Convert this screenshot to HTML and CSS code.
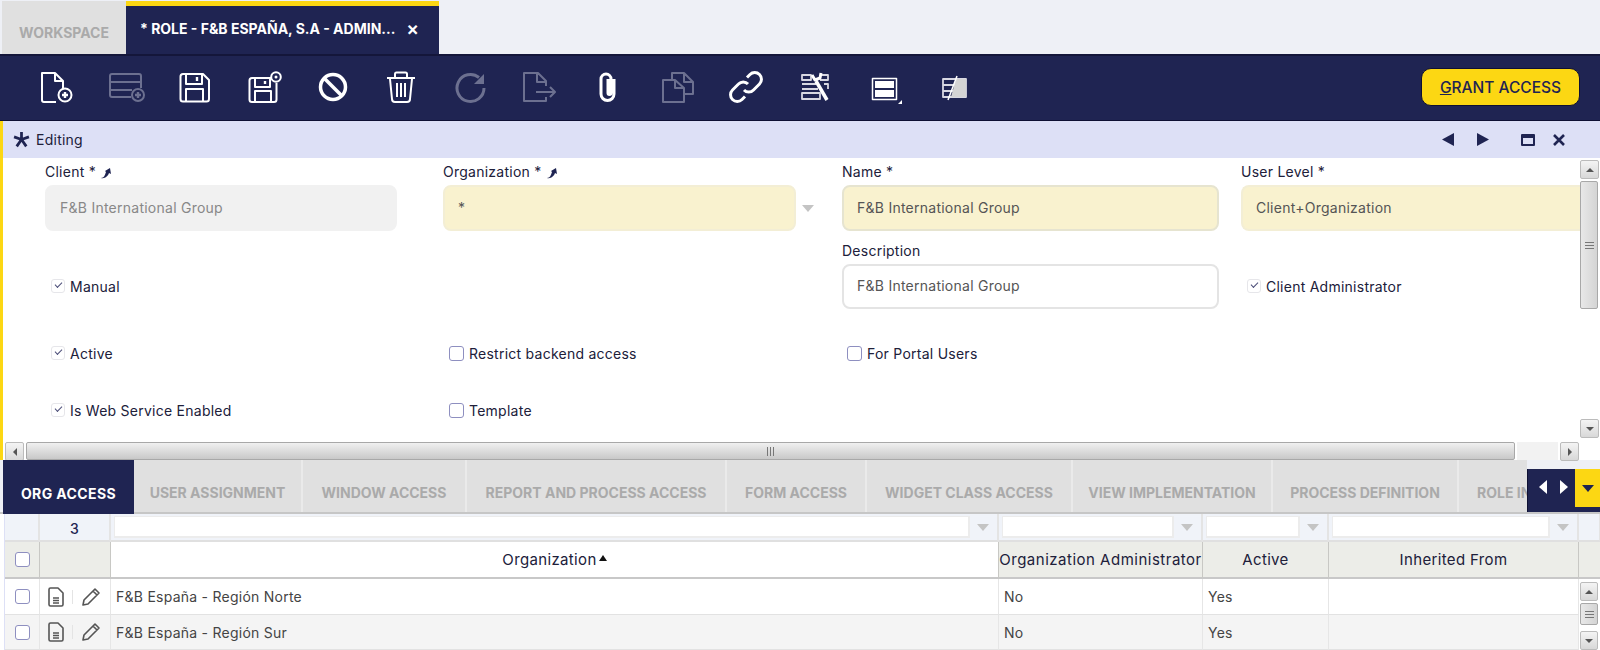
FILE: index.html
```html
<!DOCTYPE HTML>
<html>

<head>
    <meta charset="utf-8">
    <title>Role - F&amp;B España, S.A - Admin</title>
    <link rel="stylesheet" href="styles.css">
</head>

<body>
    <div class="top-tabs">
        <div class="top-tab">WORKSPACE</div>
        <div class="top-tab top-tab-on"><span>* ROLE - F&amp;B ESPAÑA, S.A - ADMIN...</span><b>×</b></div>
    </div>

    <div class="toolbar">
        <div class="tool"><svg viewBox="0 0 40 34"><path d="M17 32H5a2 2 0 0 1-2-2V3h13l8 8v8M16 3v8h8"/><circle cx="26" cy="25" r="6.500"/><path class="heavy" d="M23 25h6M26 22v6"/></svg></div>
        <div class="tool off"><svg viewBox="0 0 40 34"><path d="M23 27H4a2 2 0 0 1-2-2V6a2 2 0 0 1 2-2h27a2 2 0 0 1 2 2v12M2 12h31M2 20h22"/><circle cx="30" cy="25" r="6"/><path class="heavy" d="M27 25h6M30 22v6"/></svg></div>
        <div class="tool"><svg viewBox="0 0 40 34"><path d="M6 4h20l6 6v19a2.500 2.500 0 0 1-2.500 2.500H6A2.500 2.500 0 0 1 3.500 29V6.500A2.500 2.500 0 0 1 6 4zM9 4v10h16V4M9 31V19h17v12"/><path class="heavy" d="M20 7v4"/></svg></div>
        <div class="tool"><svg viewBox="0 0 40 34"><path d="M25 8H6a2.500 2.500 0 0 0-2.500 2.500v19A2.500 2.500 0 0 0 6 32h22a2.500 2.500 0 0 0 2.500-2.500V13M9 8v9h15V8M9 32V21h16v11"/><path class="heavy" d="M19 11v3"/><circle cx="30" cy="7" r="4.800"/><circle class="dot" cx="30" cy="7" r="1.500"/></svg></div>
        <div class="tool"><svg viewBox="0 0 40 34"><circle class="thick" cx="18" cy="17" r="12.500"/><path class="thick" d="M9 8l18 18"/></svg></div>
        <div class="tool"><svg viewBox="0 0 40 34"><path d="M3 8h28M11 7V4a1.500 1.500 0 0 1 1.500-1.500h9A1.500 1.500 0 0 1 23 4v3M6 9l2 20a3 3 0 0 0 3 3h12a3 3 0 0 0 3-3l2-20M13 13v14M17 13v14M21 13v14"/></svg></div>
        <div class="tool off"><svg viewBox="0 0 40 34"><path class="mid" d="M31 18a13.500 13.500 0 1 1-5-10.500"/><path class="fill" d="M31 4v10H21z"/></svg></div>
        <div class="tool off"><svg viewBox="0 0 40 34"><path d="M24 16v-5l-8-8H2v28h22v-4M15 3v9h9M14 22h19M28 17l5 5-5 5"/></svg></div>
        <div class="tool"><svg viewBox="0 0 40 34"><path class="mid" d="M23 9v15a6.500 6.500 0 0 1-13 0V9a5 5 0 0 1 10 0v14a1.500 1.500 0 0 1-3 0V9"/></svg></div>
        <div class="tool off"><svg viewBox="0 0 40 34"><path d="M12 9V3h12l9 9v12h-9M3 10h12l9 8v14H3zM15 10v8h9M24 3v9h9"/></svg></div>
        <div class="tool"><svg viewBox="0 0 40 34"><path class="mid" d="M15 20a6.500 6.500 0 0 0 9.500 0l6-6a6.500 6.500 0 0 0-9.500-9.500l-3 3M19 14a6.500 6.500 0 0 0-9.500 0l-6 6a6.500 6.500 0 0 0 9.500 9.500l3-3"/></svg></div>
        <div class="tool"><svg viewBox="0 0 40 34"><path class="soft" d="M4 5h9v5H4zM22 5h8v5h-8M4 14h14M4 19h16M26 14h4v5M4 23h18v6H4z"/><path class="thick" d="M18 11l11 19"/><path class="mid" d="M14 5l3 5 5-2 1-5"/></svg></div>
        <div class="tool"><svg viewBox="0 0 40 34"><rect class="thin" x="5.500" y="8.500" width="24" height="21"/><rect class="fill" x="8" y="11" width="19" height="7"/><rect class="fill" x="8" y="20" width="19" height="7"/><path class="fill" d="M35 30v4h-4z"/></svg></div>
        <div class="tool"><svg viewBox="0 0 40 34"><path class="soft" d="M7 9h23v18H7zM7 15h23M7 21h23"/><path class="fill faded" d="M20 9h10v18H15z"/><path class="thin" d="M21 6l-9 24"/></svg></div>
        <button class="grant"><u>G</u>RANT ACCESS</button>
    </div>

    <div class="status">
        <svg class="star" viewBox="0 0 16 16"><path d="M8 1v7M8 8L1 5.500M8 8l7-2.500M8 8l-4.500 6.500M8 8l4.500 6.500"/></svg>
        <span>Editing</span>
        <div class="status-icons">
            <svg viewBox="0 0 12 13"><path d="M12 0v13L0 6.500z"/></svg>
            <svg viewBox="0 0 12 13"><path d="M0 0v13l12-6.500z"/></svg>
            <svg class="wide" viewBox="0 0 16 14"><path d="M2 1h12a1 1 0 0 1 1 1v10a1 1 0 0 1-1 1H2a1 1 0 0 1-1-1V2a1 1 0 0 1 1-1zm1 4v6h10V5z"/></svg>
            <svg class="wide shut" viewBox="0 0 14 14"><path class="cross" d="M2 2l10 10M12 2L2 12"/></svg>
        </div>
    </div>

    <div class="form-box">
        <div class="form-main">
            <div class="form-grid">
                <div class="field">
                    <label>Client * <svg class="pin" viewBox="0 0 12 12"><path d="M1 11c3 0 4-3 5-6L5 4l5-3 1 6-2-1c-1 3-4 6-8 5z"/></svg></label>
                    <div class="input input-off size-a">F&amp;B International Group</div>
                </div>
                <div class="field">
                    <label>Organization * <svg class="pin" viewBox="0 0 12 12"><path d="M1 11c3 0 4-3 5-6L5 4l5-3 1 6-2-1c-1 3-4 6-8 5z"/></svg></label>
                    <div class="input-row">
                        <div class="input input-req size-b">*</div>
                        <i class="arrow"></i>
                    </div>
                </div>
                <div class="field">
                    <label>Name *</label>
                    <div class="input input-req input-line size-c">F&amp;B International Group</div>
                </div>
                <div class="field">
                    <label>User Level *</label>
                    <div class="input input-req input-open">Client+Organization</div>
                </div>

                <div class="check check-mid"><i class="box box-on"></i>Manual</div>
                <div></div>
                <div class="field">
                    <label>Description</label>
                    <div class="input input-line size-c">F&amp;B International Group</div>
                </div>
                <div class="check check-mid"><i class="box box-on"></i>Client Administrator</div>

                <div class="check"><i class="box box-on"></i>Active</div>
                <div class="check"><i class="box"></i>Restrict backend access</div>
                <div class="check check-col3"><i class="box"></i>For Portal Users</div>
                <div></div>

                <div class="check"><i class="box box-on"></i>Is Web Service Enabled</div>
                <div class="check"><i class="box"></i>Template</div>
                <div></div>
                <div></div>
            </div>
            <div class="vbar">
                <div class="sbtn"><i class="tri-up"></i></div>
                <div class="vthumb"><i class="grip"></i></div>
                <div class="strough"></div>
                <div class="sbtn"><i class="tri-down"></i></div>
            </div>
        </div>
        <div class="hbar">
            <div class="sbtn"><i class="tri-left"></i></div>
            <div class="hthumb"><i class="grip grip-v"></i></div>
            <div class="strough"></div>
            <div class="sbtn"><i class="tri-right"></i></div>
        </div>
    </div>

    <div class="sub-tabs">
        <div class="sub-tab sub-tab-on">ORG ACCESS</div>
        <div class="sub-tab">USER ASSIGNMENT</div>
        <div class="sub-tab">WINDOW ACCESS</div>
        <div class="sub-tab">REPORT AND PROCESS ACCESS</div>
        <div class="sub-tab">FORM ACCESS</div>
        <div class="sub-tab">WIDGET CLASS ACCESS</div>
        <div class="sub-tab">VIEW IMPLEMENTATION</div>
        <div class="sub-tab">PROCESS DEFINITION</div>
        <div class="sub-tab">ROLE IN</div>
        <div class="tab-nav">
            <span class="tab-arrows"><i class="nav-left"></i><i class="nav-right"></i></span>
            <span class="tab-menu"><i class="nav-down"></i></span>
        </div>
    </div>

    <div class="grid">
        <div class="flt"></div>
        <div class="flt flt-count">3</div>
        <div class="flt"><div class="flt-input"></div><i class="arrow"></i></div>
        <div class="flt"><div class="flt-input"></div><i class="arrow"></i></div>
        <div class="flt"><div class="flt-input"></div><i class="arrow"></i></div>
        <div class="flt"><div class="flt-input"></div><i class="arrow"></i></div>
        <div class="flt"></div>

        <div class="hd hd-check"><i class="box"></i></div>
        <div class="hd"></div>
        <div class="hd hd-plain">Organization<i class="sort"></i></div>
        <div class="hd hd-tight">Organization Administrator</div>
        <div class="hd">Active</div>
        <div class="hd">Inherited From</div>
        <div class="hd"></div>

        <div class="cell cell-check"><i class="box"></i></div>
        <div class="cell cell-icons">
            <svg viewBox="0 0 16 20"><path d="M2.500 1H10l5 5v11.500a1.500 1.500 0 0 1-1.500 1.500h-11A1.500 1.500 0 0 1 1 17.500v-15A1.500 1.500 0 0 1 2.500 1zM5 11h6M5 13.500h6M5 16h6"/></svg>
            <i class="sep"></i>
            <svg class="pencil" viewBox="0 0 20 20"><path d="M2 18l1-5L14 2l4 4L7 17zM12 4l4 4"/></svg>
        </div>
        <div class="cell">F&amp;B España - Región Norte</div>
        <div class="cell">No</div>
        <div class="cell">Yes</div>
        <div class="cell"></div>
        <div class="grid-bar">
            <div class="sbtn"><i class="tri-up"></i></div>
            <div class="vthumb"><i class="grip"></i></div>
            <div class="strough"></div>
            <div class="sbtn"><i class="tri-down"></i></div>
        </div>

        <div class="cell cell-alt cell-check"><i class="box"></i></div>
        <div class="cell cell-alt cell-icons">
            <svg viewBox="0 0 16 20"><path d="M2.500 1H10l5 5v11.500a1.500 1.500 0 0 1-1.500 1.500h-11A1.500 1.500 0 0 1 1 17.500v-15A1.500 1.500 0 0 1 2.500 1zM5 11h6M5 13.500h6M5 16h6"/></svg>
            <i class="sep"></i>
            <svg class="pencil" viewBox="0 0 20 20"><path d="M2 18l1-5L14 2l4 4L7 17zM12 4l4 4"/></svg>
        </div>
        <div class="cell cell-alt">F&amp;B España - Región Sur</div>
        <div class="cell cell-alt">No</div>
        <div class="cell cell-alt">Yes</div>
        <div class="cell cell-alt"></div>
    </div>
</body>

</html>
```

FILE: styles.css
```css
* {
    margin: 0;
    padding: 0;
    box-sizing: border-box;
}

body {
    width: 1600px;
    height: 650px;
    overflow: hidden;
    background: #fff;
    font-family: Inter, "Open Sans", sans-serif;
    font-size: 14px;
    letter-spacing: 0.25px;
    color: #20203a;
}

i {
    display: block;
}

/* top tabs */
.top-tabs {
    height: 56px;
    display: flex;
    padding: 1px 0 0 2px;
    background: #eef0f6;
    border-bottom: 2px solid #14163a;
}

.top-tab {
    width: 124px;
    background: #e0e0e0;
    color: #aaa;
    font-size: 14px;
    font-weight: 700;
    letter-spacing: 0;
    display: flex;
    align-items: center;
    justify-content: center;
    padding-top: 9px;
}

.top-tab-on {
    width: 313px;
    background: #1f2452;
    border-top: 5px solid #fcd713;
    color: #fff;
    justify-content: flex-start;
    padding: 0 0 3px 14px;
}

.top-tab-on b {
    margin-left: 11px;
    font-size: 19px;
    font-weight: 600;
    line-height: 14px;
}

/* toolbar */
.toolbar {
    height: 65px;
    display: flex;
    align-items: center;
    padding: 0 20px 2px 39px;
    background: #1f2452;
    border-bottom: 1px solid #0e1033;
}

.tool {
    width: 69px;
    height: 34px;
    flex: none;
}

.tool svg {
    height: 34px;
    width: 40px;
    fill: none;
    stroke: #fff;
    stroke-width: 2;
    stroke-linejoin: round;
}

.tool .thick {
    stroke-width: 3.5;
}

.tool .mid {
    stroke-width: 3;
}

.tool .heavy {
    stroke-width: 2.4;
}

.tool .thin {
    stroke-width: 1.5;
}

.tool .soft {
    stroke: #d8d8e2;
    stroke-width: 1.8;
}

.tool .fill {
    fill: #fff;
    stroke: none;
}

.tool .faded {
    fill: #d4d4d4;
}

.tool .dot {
    fill: #fff;
    stroke: none;
}

.off svg {
    stroke: #6c7090;
}

.tool.off .fill {
    fill: #6c7090;
}

.grant {
    margin-left: auto;
    width: 159px;
    height: 38px;
    border: 1px solid #0e1033;
    border-radius: 10px;
    background: #fcd713;
    color: #1f2452;
    font-family: inherit;
    font-size: 15.5px;
    font-weight: 500;
}

/* status bar */
.status {
    height: 37px;
    display: flex;
    align-items: center;
    padding: 0 33px 0 10px;
    background: #dde0f6;
    border-left: 3px solid #fcd713;
}

.star {
    width: 17px;
    height: 17px;
    margin-right: 6px;
    fill: none;
    stroke: #1f2452;
    stroke-width: 2.6;
}

.status-icons {
    margin-left: auto;
    display: flex;
    align-items: center;
    gap: 23px;
}

.status-icons svg {
    width: 12px;
    height: 13px;
    fill: #1f2452;
}

.status-icons .wide {
    width: 16px;
    height: 14px;
    margin-left: 8px;
}

.status-icons .shut {
    margin-left: -8px;
}

.status-icons .cross {
    stroke: #1f2452;
    stroke-width: 2.6;
}

/* form */
.form-box {
    height: 302px;
    border-left: 3px solid #fcd713;
}

.form-main {
    height: 284px;
    display: flex;
}

.form-grid {
    width: 1577px;
    padding-left: 42px;
    display: grid;
    grid-template-columns: 398px 399px 399px 339px;
    grid-template-rows: 73px 78px 54px 57px;
    overflow: hidden;
    white-space: nowrap;
}

.field {
    align-self: end;
}

.field label {
    display: flex;
    align-items: flex-start;
    gap: 4px;
    height: 22px;
}

.pin {
    width: 12px;
    height: 12px;
    margin-top: 4px;
    fill: #1f2452;
}

.input {
    height: 46px;
    display: flex;
    align-items: center;
    padding: 0 0 2px 13px;
    border: 2px solid #eee;
    border-radius: 8px;
    color: #555;
    white-space: nowrap;
}

.input-off {
    background: #f1f1f1;
    border-color: #f1f1f1;
    color: #888;
}

.input-req {
    background: #f9f2cf;
    border-color: #f3eed5;
}

.input-line {
    height: 45px;
    border-color: #e4e4e4;
}

.input-req.input-line {
    height: 46px;
    border-color: #e6e4d0;
}

.input-open {
    border-right: 0;
    border-radius: 8px 0 0 8px;
}

.size-a {
    width: 352px;
}

.size-b {
    width: 353px;
}

.size-c {
    width: 377px;
}

.input-row {
    display: flex;
    align-items: center;
}

.arrow {
    width: 0;
    height: 0;
    border: 6px solid transparent;
    border-top: 7px solid #c4c4c4;
    border-bottom: 0;
}

.input-row .arrow {
    margin-left: 6px;
}

.check {
    align-self: end;
    height: 20px;
    display: flex;
    align-items: center;
    gap: 5px;
    margin-left: 6px;
    white-space: nowrap;
}

.check-mid {
    margin-bottom: 13px;
}

.check-col3 {
    margin-left: 5px;
}

.box {
    width: 15px;
    height: 15px;
    flex: none;
    border: 1.5px solid #8e8fc0;
    border-radius: 3px;
    background: #fff;
    position: relative;
}

.box-on {
    width: 14px;
    height: 14px;
    border: 1px solid #e6e6ea;
}

.box-on::after {
    content: "";
    position: absolute;
    left: 3px;
    top: 2px;
    width: 6px;
    height: 3px;
    border-left: 1.5px solid #4b4d78;
    border-bottom: 1.5px solid #4b4d78;
    transform: rotate(-45deg);
}

/* scrollbars */
.vbar {
    width: 18px;
    padding: 2px 0 4px;
    display: flex;
    flex-direction: column;
    gap: 2px;
}

.hbar {
    height: 18px;
    display: flex;
    gap: 2px;
    padding-left: 2px;
    margin-right: 21px;
}

.sbtn {
    width: 19px;
    height: 19px;
    flex: none;
    display: flex;
    align-items: center;
    justify-content: center;
    border: 1px solid #bbb;
    border-radius: 2px;
    background: linear-gradient(#f4f4f4, #d8d8d8);
}

.vthumb,
.hthumb {
    display: flex;
    align-items: center;
    justify-content: center;
    border: 1px solid #a8a8a8;
    border-radius: 2px;
}

.vthumb {
    height: 128px;
    background: linear-gradient(90deg, #e8e8e8, #d4d4d4);
}

.hthumb {
    width: 1489px;
    background: linear-gradient(#f0f0f0, #c8c8c8);
}

.strough {
    flex: 1;
}

.hbar .strough {
    background: #f2f2f2;
}

.grip {
    width: 9px;
    height: 7px;
    border-top: 1px solid #777;
    border-bottom: 1px solid #777;
    background: linear-gradient(#777, #777) center / 100% 1px no-repeat;
}

.grip-v {
    width: 7px;
    height: 9px;
    border: 0;
    border-left: 1px solid #777;
    border-right: 1px solid #777;
    background: linear-gradient(#777, #777) center / 1px 100% no-repeat;
}

.tri-up,
.tri-down,
.tri-left,
.tri-right {
    width: 0;
    height: 0;
    border: 4px solid transparent;
}

.tri-up {
    border-bottom-color: #555;
    border-top: 0;
}

.tri-down {
    border-top-color: #555;
    border-bottom: 0;
}

.tri-left {
    border-right-color: #555;
    border-left: 0;
}

.tri-right {
    border-left-color: #555;
    border-right: 0;
}

/* sub tabs */
.sub-tabs {
    height: 54px;
    display: grid;
    grid-template-columns: 131px 169px 164px 260px 140px 206px 200px 186px 68px 73px;
    padding-left: 3px;
    background: #eef0f6;
    border-bottom: 2px solid #c6c6c6;
}

.sub-tab {
    display: flex;
    align-items: center;
    justify-content: center;
    padding-top: 12px;
    background: #e0e0e0;
    border-right: 2px solid #eaeaea;
    color: #aaa;
    font-size: 14px;
    font-weight: 700;
    letter-spacing: 0;
    white-space: nowrap;
    overflow: hidden;
}

.sub-tab:nth-child(9) {
    justify-content: flex-start;
    padding-left: 18px;
    border: 0;
}

.sub-tab-on {
    background: #1f2452;
    color: #fff;
    border: 0;
    margin-bottom: -2px;
    letter-spacing: 0.4px;
}

.tab-nav {
    display: flex;
    margin-top: 9px;
    background: #1f2452;
    border-left: 1px solid #0e1033;
}

.tab-arrows {
    width: 47px;
    display: flex;
    align-items: flex-start;
    justify-content: space-around;
    padding: 11px 0 0 4px;
}

.tab-menu {
    width: 25px;
    height: 38px;
    display: flex;
    align-items: center;
    justify-content: center;
    background: #fcd713;
}

.nav-left,
.nav-right {
    width: 0;
    height: 0;
    border: 6px solid transparent;
    border-top-width: 7px;
    border-bottom-width: 7px;
}

.nav-left {
    border-right: 8px solid #fff;
    border-left: 0;
}

.nav-right {
    border-left: 8px solid #fff;
    border-right: 0;
}

.nav-down {
    width: 0;
    height: 0;
    border: 6px solid transparent;
    border-top: 7px solid #1f2452;
    border-bottom: 0;
}

/* grid */
.grid {
    display: grid;
    grid-template-columns: 35px 71px 888px 204px 126px 250px 22px;
    grid-template-rows: 28px 37px 36px 35px;
    margin-left: 4px;
    border-left: 1px solid #dde0f6;
    width: 1596px;
}

.flt {
    display: flex;
    align-items: center;
    gap: 7px;
    padding: 2px 8px 2px 3px;
    background: #f0f3f9;
    border-right: 2px solid #e4e4e4;
    border-bottom: 2px solid #e0e0e0;
}

.flt-input {
    flex: 1;
    height: 100%;
    background: #fff;
    border: 2px solid #ececec;
    border-width: 1px 2px 2px 1px;
}

.flt-count {
    justify-content: center;
    padding: 3px 0 0;
    font-size: 14px;
    font-weight: 500;
    color: #1f2452;
}

.hd {
    display: flex;
    align-items: center;
    justify-content: center;
    gap: 2px;
    background: #ecede8;
    border-right: 1px solid #c8c8c4;
    border-bottom: 2px solid #c8c8c8;
    font-size: 15px;
    letter-spacing: 0.35px;
    white-space: nowrap;
    overflow: hidden;
}

.hd-plain {
    background: #fff;
}

.hd-tight {
    letter-spacing: 0.5px;
}

.hd-check {
    justify-content: center;
    padding: 0;
}

.sort {
    width: 0;
    height: 0;
    margin-bottom: 4px;
    border: 4px solid transparent;
    border-bottom: 6px solid #111;
    border-top: 0;
}

.cell {
    display: flex;
    align-items: center;
    padding-left: 5px;
    border-right: 1px solid #e6e6e6;
    border-bottom: 1px solid #e2e2e2;
    color: #444;
    white-space: nowrap;
}

.cell-alt {
    background: #f4f4f4;
}

.cell-check {
    justify-content: center;
    padding: 0;
}

.cell-icons {
    gap: 8px;
    padding-left: 8px;
}

.cell-icons svg {
    width: 16px;
    height: 20px;
    fill: none;
    stroke: #555;
    stroke-width: 1.6;
    stroke-linejoin: round;
}

.cell-icons .pencil {
    width: 20px;
}

.sep {
    width: 1px;
    height: 14px;
    background: #e4e4e4;
}

.grid-bar {
    grid-column: 7;
    grid-row: 3 / span 2;
    display: flex;
    flex-direction: column;
    gap: 2px;
    padding: 3px 0 0 1px;
}

.grid-bar .sbtn {
    width: 18px;
    height: 19px;
}

.grid-bar .vthumb {
    width: 18px;
    height: 22px;
}
```
